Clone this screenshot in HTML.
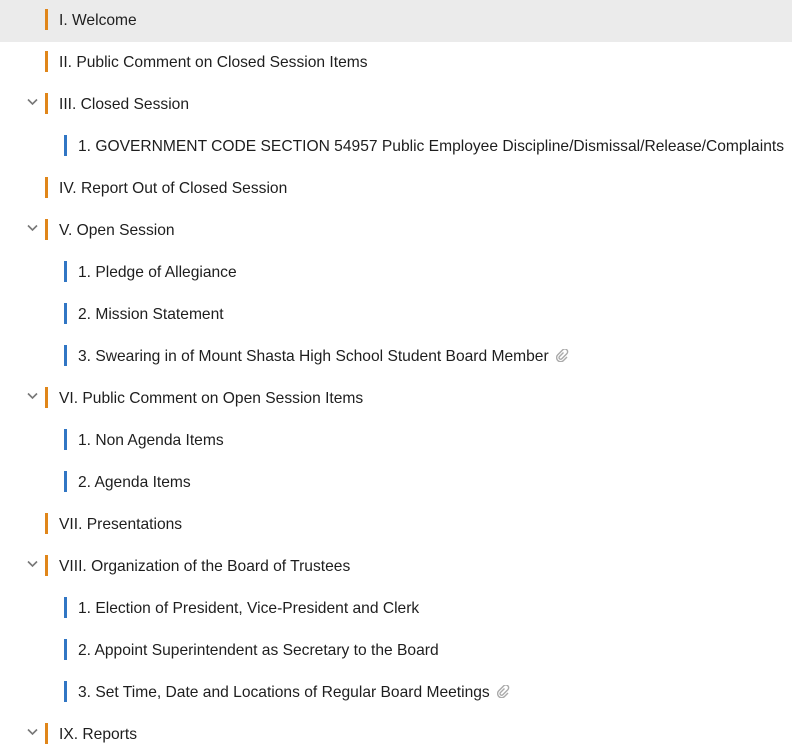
<!DOCTYPE html>
<html><head><meta charset="utf-8"><style>
body{margin:0;width:792px;height:748px;overflow:hidden;background:#fff;font-family:"Liberation Sans",sans-serif;}
.r{position:relative;height:42px;}
.r.sel{background:#ebebeb;}
.bar{position:absolute;top:9px;width:3px;height:21px;}
.o{background:#e0861a;left:45px;}
.b{background:#3176c4;left:64px;}
.t{position:absolute;top:12px;font-size:15.6px;color:#1e1e1e;white-space:nowrap;}
.l1 .t{left:59px}.l2 .t{left:78px}
.chev{position:absolute;left:27px;top:14px;}
.clip{display:inline-block;vertical-align:middle;margin-left:7px;margin-top:-2px}
</style></head><body>
<div class="r l1 sel"><div class="bar o"></div><div class="t">I. Welcome</div></div>
<div class="r l1"><div class="bar o"></div><div class="t">II. Public Comment on Closed Session Items</div></div>
<div class="r l1"><svg class="chev" width="11" height="8" viewBox="0 0 11 8"><path d="M1 1.5l4.5 4.5 4.5-4.5" fill="none" stroke="#777" stroke-width="1.6"/></svg><div class="bar o"></div><div class="t">III. Closed Session</div></div>
<div class="r l2"><div class="bar b"></div><div class="t">1. GOVERNMENT CODE SECTION 54957 Public Employee Discipline/Dismissal/Release/Complaints</div></div>
<div class="r l1"><div class="bar o"></div><div class="t">IV. Report Out of Closed Session</div></div>
<div class="r l1"><svg class="chev" width="11" height="8" viewBox="0 0 11 8"><path d="M1 1.5l4.5 4.5 4.5-4.5" fill="none" stroke="#777" stroke-width="1.6"/></svg><div class="bar o"></div><div class="t">V. Open Session</div></div>
<div class="r l2"><div class="bar b"></div><div class="t">1. Pledge of Allegiance</div></div>
<div class="r l2"><div class="bar b"></div><div class="t">2. Mission Statement</div></div>
<div class="r l2"><div class="bar b"></div><div class="t">3. Swearing in of Mount Shasta High School Student Board Member<svg class="clip" width="13" height="13" viewBox="0 0 13 13"><path d="M7.5 3.5L3.5 7.5a1.6 1.6 0 0 0 2.3 2.3l5-5a2.8 2.8 0 0 0-4-4l-5 5a4 4 0 0 0 5.7 5.7l3.5-3.5" fill="none" stroke="#aaa" stroke-width="1.4"/></svg></div></div>
<div class="r l1"><svg class="chev" width="11" height="8" viewBox="0 0 11 8"><path d="M1 1.5l4.5 4.5 4.5-4.5" fill="none" stroke="#777" stroke-width="1.6"/></svg><div class="bar o"></div><div class="t">VI. Public Comment on Open Session Items</div></div>
<div class="r l2"><div class="bar b"></div><div class="t">1. Non Agenda Items</div></div>
<div class="r l2"><div class="bar b"></div><div class="t">2. Agenda Items</div></div>
<div class="r l1"><div class="bar o"></div><div class="t">VII. Presentations</div></div>
<div class="r l1"><svg class="chev" width="11" height="8" viewBox="0 0 11 8"><path d="M1 1.5l4.5 4.5 4.5-4.5" fill="none" stroke="#777" stroke-width="1.6"/></svg><div class="bar o"></div><div class="t">VIII. Organization of the Board of Trustees</div></div>
<div class="r l2"><div class="bar b"></div><div class="t">1. Election of President, Vice-President and Clerk</div></div>
<div class="r l2"><div class="bar b"></div><div class="t">2. Appoint Superintendent as Secretary to the Board</div></div>
<div class="r l2"><div class="bar b"></div><div class="t">3. Set Time, Date and Locations of Regular Board Meetings<svg class="clip" width="13" height="13" viewBox="0 0 13 13"><path d="M7.5 3.5L3.5 7.5a1.6 1.6 0 0 0 2.3 2.3l5-5a2.8 2.8 0 0 0-4-4l-5 5a4 4 0 0 0 5.7 5.7l3.5-3.5" fill="none" stroke="#aaa" stroke-width="1.4"/></svg></div></div>
<div class="r l1"><svg class="chev" width="11" height="8" viewBox="0 0 11 8"><path d="M1 1.5l4.5 4.5 4.5-4.5" fill="none" stroke="#777" stroke-width="1.6"/></svg><div class="bar o"></div><div class="t">IX. Reports</div></div>
</body></html>
